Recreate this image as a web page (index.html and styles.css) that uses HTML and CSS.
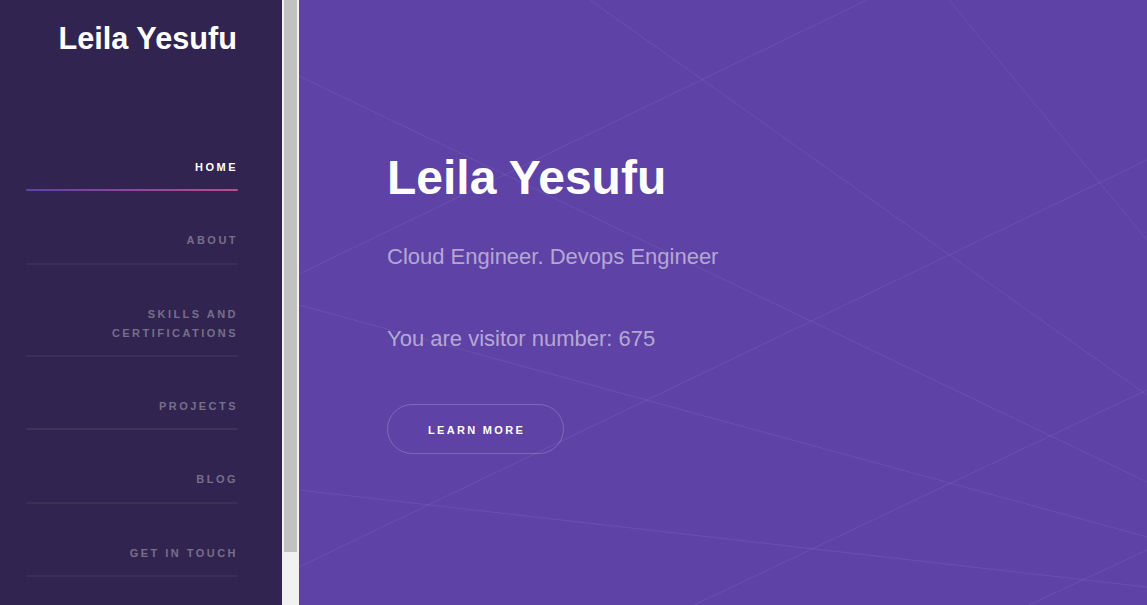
FILE: index.html
```html
<!DOCTYPE html>
<html lang="en">
<head>
<meta charset="utf-8">
<title>Leila Yesufu</title>
<link rel="stylesheet" href="styles.css">
</head>
<body>
<div class="page">
  <aside class="sidebar">
    <div class="brand">Leila Yesufu</div>
    <nav class="nav">
      <a class="nav-item active" href="#intro"><span class="nav-label">Home</span></a>
      <a class="nav-item" href="#about"><span class="nav-label">About</span></a>
      <a class="nav-item" href="#skills"><span class="nav-label">Skills and Certifications</span></a>
      <a class="nav-item hover" href="#projects"><span class="nav-label">Projects</span></a>
      <a class="nav-item" href="#blog"><span class="nav-label">Blog</span></a>
      <a class="nav-item" href="#contact"><span class="nav-label">Get in touch</span></a>
    </nav>
  </aside>
  <div class="scrollbar"><div class="scroll-thumb"></div></div>
  <main class="main" id="intro">
    <svg class="bg-lines" viewBox="0 0 848 605" preserveAspectRatio="none" aria-hidden="true">
      <g stroke="rgba(255,255,255,0.08)" stroke-width="1" fill="none">
        <line x1="291" y1="0" x2="848" y2="395"/>
        <line x1="568" y1="0" x2="0" y2="274"/>
        <line x1="650" y1="0" x2="848" y2="240"/>
        <line x1="848" y1="160" x2="0" y2="567"/>
        <line x1="0" y1="76" x2="848" y2="482"/>
        <line x1="0" y1="305" x2="848" y2="537"/>
        <line x1="848" y1="390" x2="395" y2="605"/>
        <line x1="0" y1="490" x2="848" y2="587"/>
        <line x1="848" y1="550" x2="730" y2="605"/>
      </g>
    </svg>
    <div class="intro">
      <h1 class="intro-title">Leila Yesufu</h1>
      <p class="intro-sub">Cloud Engineer. Devops Engineer</p>
      <p class="intro-visits">You are visitor number: <span class="count">675</span></p>
      <a class="button" href="#about">Learn more</a>
    </div>
  </main>
</div>
</body>
</html>
```

FILE: styles.css
```css
* { box-sizing: border-box; }

html, body {
  margin: 0;
  padding: 0;
  height: 100%;
}

body {
  font-family: "Liberation Sans", Arial, sans-serif;
  background: #5e42a6;
  color: #fff;
  overflow: hidden;
}

.page {
  display: flex;
  height: 100vh;
}

/* Sidebar */
.sidebar {
  width: 282px;
  flex: 0 0 282px;
  background: #312450;
  padding: 21px 44px 0 26px;
  overflow: hidden;
}

.brand {
  font-size: 30.7px;
  font-weight: bold;
  line-height: 36px;
  text-align: right;
  color: #fff;
  margin: 0 1px 61px 0;
}

.nav {
  display: flex;
  flex-direction: column;
}

.nav-item {
  display: block;
  text-align: right;
  text-decoration: none;
  text-transform: uppercase;
  font-size: 11px;
  font-weight: bold;
  letter-spacing: 0.225em;
  line-height: 19.3px;
  color: rgba(255, 255, 255, 0.35);
  padding: 40px 0 0 0;
}

.nav-label {
  display: block;
  padding-bottom: 12px;
}

.nav-item::after {
  content: "";
  display: block;
  height: 2px;
  border-radius: 2px;
  background: rgba(255, 255, 255, 0.05);
}

.nav-item.hover::after {
  background: rgba(255, 255, 255, 0.07);
}

.nav-item.active {
  color: #fff;
}

.nav-item.active::after {
  background-image: linear-gradient(to right, #5e42a6, #b74e91);
}

/* Fake scrollbar of the sidebar panel */
.scrollbar {
  width: 17px;
  flex: 0 0 17px;
  background: #f1f1f1;
  padding: 0 2px;
}

.scroll-thumb {
  height: 552px;
  background: #c1c1c1;
}

/* Main */
.main {
  position: relative;
  flex: 1;
  background: #5e42a6;
  overflow: hidden;
}

.bg-lines {
  position: absolute;
  top: 0;
  left: 0;
  width: 100%;
  height: 100%;
}

.intro {
  position: relative;
  padding: 154px 0 0 88px;
}

.intro-title {
  margin: 0 0 37px;
  font-size: 48px;
  line-height: 48px;
  font-weight: bold;
  color: #fff;
}

.intro-sub,
.intro-visits {
  margin: 0;
  font-size: 22px;
  line-height: 36px;
  color: rgba(255, 255, 255, 0.55);
}

.intro-sub {
  margin-bottom: 46px;
}

.intro-visits {
  margin-bottom: 47px;
}

.button {
  display: inline-flex;
  align-items: center;
  justify-content: center;
  height: 50px;
  padding: 1px 38px 0 40px;
  border: 1px solid rgba(255, 255, 255, 0.2);
  border-radius: 25px;
  color: #fff;
  text-decoration: none;
  text-transform: uppercase;
  font-size: 11px;
  font-weight: bold;
  letter-spacing: 0.21em;
}
```
